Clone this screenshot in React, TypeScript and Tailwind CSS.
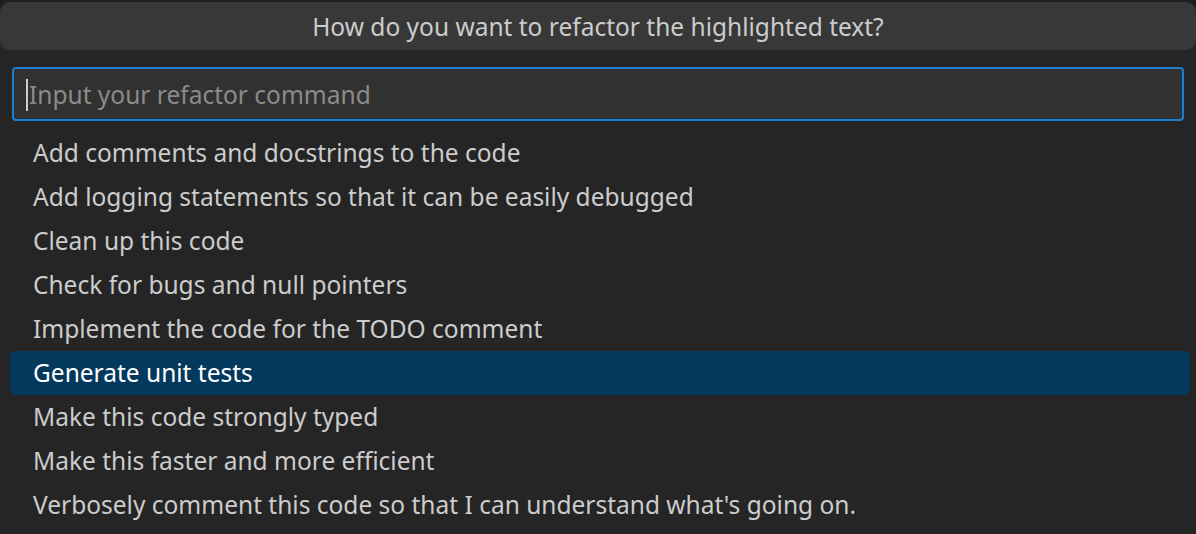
const items = [
  'Add comments and docstrings to the code',
  'Add logging statements so that it can be easily debugged',
  'Clean up this code',
  'Check for bugs and null pointers',
  'Implement the code for the TODO comment',
  'Generate unit tests',
  'Make this code strongly typed',
  'Make this faster and more efficient',
  "Verbosely comment this code so that I can understand what's going on.",
];

const selected = 5;

export default function App() {
  return (
    <div className="w-[1196px] h-[534px] overflow-hidden bg-[#1f1f1f] pt-[2px] font-['Segoe_UI','Noto_Sans',sans-serif] text-[24.5px]">
      <div className="h-full bg-[#252526] rounded-t-[10px] flex flex-col">
        <div className="h-[48px] bg-[#383838] rounded-[10px] flex items-center justify-center text-[#cccccc] pt-[3px]">
          How do you want to refactor the highlighted text?
        </div>
        <div className="px-[12px] pt-[17px]">
          <div className="h-[54px] border-2 border-[#1a7fd0] rounded-[4px] bg-[#313131] flex items-center pl-[12px] pt-[2px]">
            <span className="w-[2px] h-[32px] bg-[#cccccc] mr-px" />
            <span className="text-[#8b8b8b]">Input your refactor command</span>
          </div>
        </div>
        <div className="pl-[10px] pr-[6px] pt-[10px] flex flex-col">
          {items.map((t, i) => (
            <div
              key={t}
              className={`h-[44px] flex items-center pl-[23px] rounded-[6px] ${
                i === selected ? 'bg-[#04395e] text-white' : 'text-[#cccccc]'
              }`}
            >
              {t}
            </div>
          ))}
        </div>
      </div>
    </div>
  );
}
